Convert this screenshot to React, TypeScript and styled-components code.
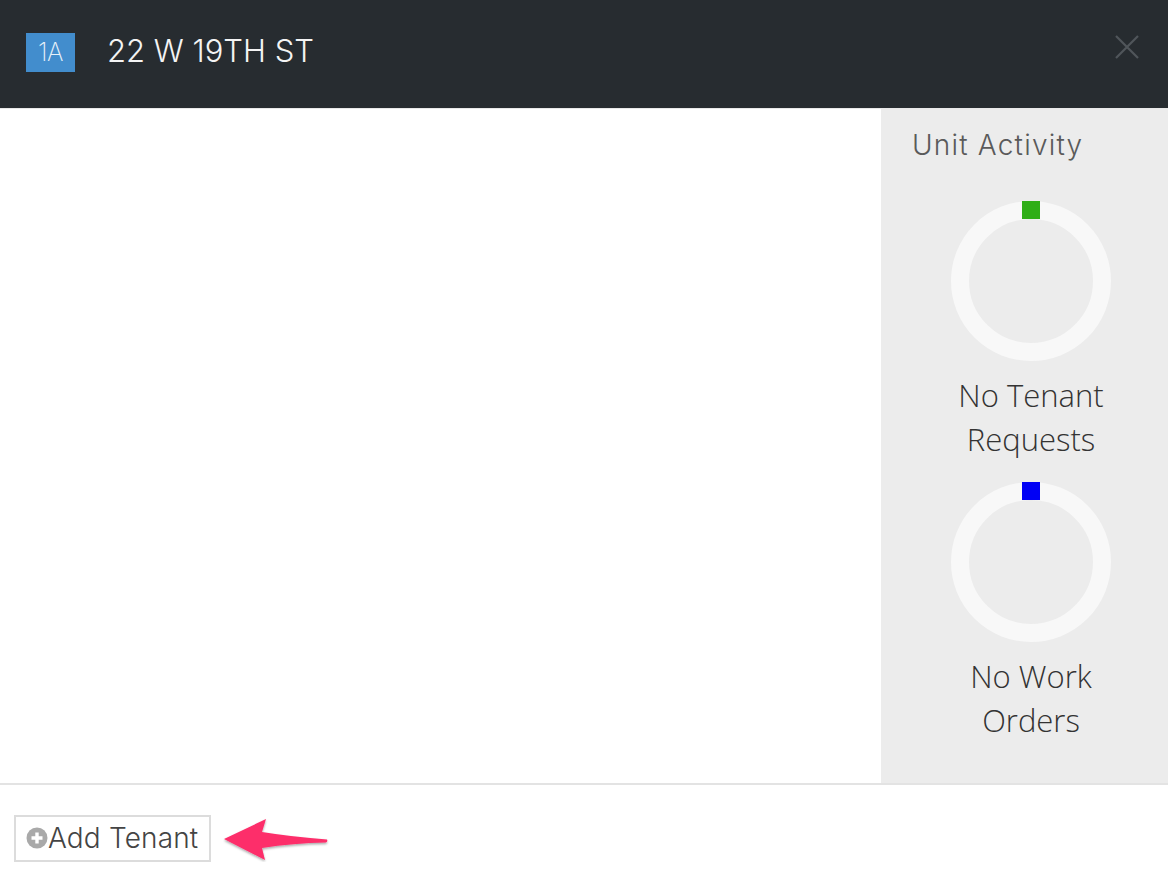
import * as React from "react";
import styled, { createGlobalStyle } from "styled-components";

const Global = createGlobalStyle`
  html, body {
    margin: 0;
    padding: 0;
    background: #fff;
  }
  * {
    box-sizing: border-box;
  }
`;

const Page = styled.div`
  width: 1168px;
  height: 876px;
  display: flex;
  flex-direction: column;
  overflow: hidden;
  font-family: Inter, "Liberation Sans", sans-serif;
`;

const Header = styled.header`
  height: 109px;
  flex: none;
  display: flex;
  align-items: center;
  padding: 0 29px 4px 26px;
  background: #272c30;
  border-bottom: 1px solid #e9e9e9;
`;

const UnitBadge = styled.span`
  width: 49px;
  height: 39px;
  display: flex;
  align-items: center;
  justify-content: center;
  background: #428dcd;
  color: #e8f1f9;
  font-size: 25px;
  font-weight: 200;
  letter-spacing: -0.5px;
`;

const Address = styled.h1`
  flex: 1 1 0;
  margin: 0 0 3px 32px;
  color: #f4f4f4;
  font-size: 31px;
  font-weight: 300;
`;

const CloseButton = styled.button`
  width: 24px;
  height: 24px;
  margin-bottom: 10px;
  padding: 0;
  border: 0;
  background: none;
  display: flex;
`;

const Body = styled.div`
  flex: 1 1 0;
  display: flex;
  min-height: 0;
`;

const Main = styled.main`
  flex: 1 1 0;
  background: #fff;
`;

const Sidebar = styled.aside`
  width: 287px;
  flex: none;
  padding: 18px 18px 0 31px;
  background: #ececec;
`;

const SidebarTitle = styled.h2`
  margin: 0 0 37px;
  color: #5a5a5a;
  font-size: 28px;
  line-height: 37px;
  font-weight: 300;
  letter-spacing: 1.2px;
`;

const Activity = styled.div`
  display: flex;
  flex-direction: column;
  align-items: center;
  margin-bottom: 21px;
`;

const Ring = styled.div`
  position: relative;
  width: 160px;
  height: 160px;
  border: 18px solid #f8f8f8;
  border-radius: 50%;
`;

const Marker = styled.span<{ $color: string }>`
  position: absolute;
  top: -18px;
  left: 53px;
  width: 18px;
  height: 18px;
  background: ${props => props.$color};
`;

const ActivityLabel = styled.div`
  width: 170px;
  margin-top: 12px;
  color: #333;
  font-family: "Open Sans", sans-serif;
  font-size: 31px;
  line-height: 44px;
  font-weight: 300;
  text-align: center;
`;

const Footer = styled.footer`
  height: 93px;
  flex: none;
  display: flex;
  align-items: center;
  padding: 30px 0 14px 14px;
  background: #fff;
  border-top: 2px solid #e3e3e3;
`;

const AddButton = styled.button`
  width: 197px;
  height: 47px;
  display: flex;
  align-items: center;
  padding: 0 0 1px 10px;
  background: #fff;
  border: 2px solid #dcdcdc;
  color: #444;
  font-family: Inter, "Liberation Sans", sans-serif;
  font-size: 28px;
  font-weight: 300;
  letter-spacing: 0.15px;
`;

const Arrow = styled.svg`
  width: 106px;
  height: 47px;
  margin-left: 12px;
  flex: none;
`;

const PlusCircle = () => (
  <svg width="22" height="22" viewBox="0 0 22 22" style={{ flex: "none" }}>
    <circle cx="11" cy="11" r="10.5" fill="#a9a9a9" />
    <path d="M11 5.5v11M5.5 11h11" stroke="#fff" strokeWidth="3.4" />
  </svg>
);

const activities = [
  { color: "#2fae17", label: "No Tenant Requests" },
  { color: "#0000f5", label: "No Work Orders" }
];

const App = () => (
  <Page>
    <Global />
    <Header>
      <UnitBadge>1A</UnitBadge>
      <Address>22 W 19TH ST</Address>
      <CloseButton aria-label="Close">
        <svg width="24" height="24" viewBox="0 0 24 24">
          <path d="M1 1l22 22M23 1L1 23" stroke="#50565a" strokeWidth="2.2" />
        </svg>
      </CloseButton>
    </Header>
    <Body>
      <Main />
      <Sidebar>
        <SidebarTitle>Unit Activity</SidebarTitle>
        {activities.map(activity => (
          <Activity key={activity.label}>
            <Ring>
              <Marker $color={activity.color} />
            </Ring>
            <ActivityLabel>{activity.label}</ActivityLabel>
          </Activity>
        ))}
      </Sidebar>
    </Body>
    <Footer>
      <AddButton>
        <PlusCircle />
        Add Tenant
      </AddButton>
      <Arrow viewBox="0 0 106 47">
        <defs>
          <filter id="arrowShadow" x="-10%" y="-20%" width="120%" height="150%">
            <feDropShadow dx="0" dy="1.5" stdDeviation="1.2" floodColor="#000" floodOpacity="0.35" />
          </filter>
        </defs>
        <path
          d="M1 24L43 4L39 17Q70 22 104 24.5Q105 26.5 103 27.5Q70 28 39 33L42 45Z"
          fill="#fd2d6b"
          filter="url(#arrowShadow)"
        />
      </Arrow>
    </Footer>
  </Page>
);

export default App;
